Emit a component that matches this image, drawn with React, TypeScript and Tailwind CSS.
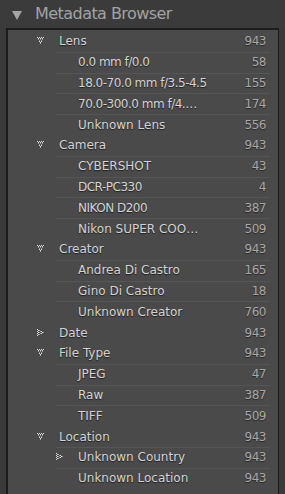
import React from "react";

type Row = { label: string; count: string; level: 0 | 1; icon?: "down" | "right" | "none"; line?: boolean };

const rows: Row[] = [
  { label: "Lens", count: "943", level: 0, icon: "down" },
  { label: "0.0 mm f/0.0", count: "58", level: 1, line: true },
  { label: "18.0-70.0 mm f/3.5-4.5", count: "155", level: 1, line: true },
  { label: "70.0-300.0 mm f/4.…", count: "174", level: 1, line: true },
  { label: "Unknown Lens", count: "556", level: 1, line: true },
  { label: "Camera", count: "943", level: 0, icon: "down" },
  { label: "CYBERSHOT", count: "43", level: 1, line: true },
  { label: "DCR-PC330", count: "4", level: 1, line: true },
  { label: "NIKON D200", count: "387", level: 1, line: true },
  { label: "Nikon SUPER COO…", count: "509", level: 1, line: true },
  { label: "Creator", count: "943", level: 0, icon: "down" },
  { label: "Andrea Di Castro", count: "165", level: 1, line: true },
  { label: "Gino Di Castro", count: "18", level: 1, line: true },
  { label: "Unknown Creator", count: "760", level: 1, line: true },
  { label: "Date", count: "943", level: 0, icon: "right" },
  { label: "File Type", count: "943", level: 0, icon: "down" },
  { label: "JPEG", count: "47", level: 1, line: true },
  { label: "Raw", count: "387", level: 1, line: true },
  { label: "TIFF", count: "509", level: 1, line: true },
  { label: "Location", count: "943", level: 0, icon: "down" },
  { label: "Unknown Country", count: "943", level: 1, icon: "right", line: true },
  { label: "Unknown Location", count: "943", level: 1, line: true },
];

function DotDown() {
  const dots: [number, number][] = [];
  [[0, 2, 4, 6], [1, 3, 5], [2, 4], [3]].forEach((xs, y) => xs.forEach((x) => dots.push([x, y * 2])));
  [[1, 3, 5], [2, 4], [3]].forEach((xs, y) => xs.forEach((x) => dots.push([x, y * 2 + 1])));
  return (
    <svg width="7" height="8" viewBox="0 0 7 8" className="block">
      {dots.map(([x, y], i) => (
        <rect key={i} x={x} y={y} width="1" height="1" fill={(x + y) % 2 === 0 ? "#dcdcdc" : "#9a9a9a"} />
      ))}
    </svg>
  );
}

function DotRight() {
  const dots: [number, number][] = [];
  [[0, 2, 4, 6], [1, 3, 5], [2, 4], [3]].forEach((ys, x) => ys.forEach((y) => dots.push([x * 2, y])));
  [[1, 3, 5], [2, 4], [3]].forEach((ys, x) => ys.forEach((y) => dots.push([x * 2 + 1, y])));
  return (
    <svg width="8" height="7" viewBox="0 0 8 7" className="block">
      {dots.map(([x, y], i) => (
        <rect key={i} x={x} y={y} width="1" height="1" fill={(x + y) % 2 === 0 ? "#dcdcdc" : "#9a9a9a"} />
      ))}
    </svg>
  );
}

export default function App() {
  return (
    <div
      className="w-[285px] h-[494px] bg-[#3a3a3a] flex flex-col overflow-hidden"
      style={{ fontFamily: '"DejaVu Sans", "Liberation Sans", sans-serif' }}
    >
      <div className="h-[28px] flex items-center pl-[12px] bg-[#3b3b3b]">
        <svg width="10" height="10" viewBox="0 0 10 10" className="block mt-[1px]">
          <polygon points="0,1 10,1 5,10" fill="#a4a4a4" />
        </svg>
        <span className="text-[#a2a2a2] text-[16px] tracking-[-0.55px] ml-[13px]">Metadata Browser</span>
      </div>
      <div className="flex-1 ml-[6px] mr-[6px] border-l-2 border-t-2 border-r border-[#1c1c1c] bg-[#4a4a4a] pt-[1px] flex flex-col">
        {rows.map((r, i) => {
          const hasDigit = /[0-9]/.test(r.label);
          return (
            <div key={i} className="relative h-[20.8px] flex items-center shrink-0">
              {r.line && <div className="absolute top-0 left-[48px] right-[8px] h-px bg-[#555555]" />}
              <div className={r.level === 0 ? "w-[30px] pl-[29px]" : "w-[48px] pl-[48px]"}>
                <div className="relative">
                  {r.icon === "down" && (
                    <div className="absolute left-0 -top-[4px]">
                      <DotDown />
                    </div>
                  )}
                  {r.icon === "right" && (
                    <div className="absolute left-0 -top-[4px]">
                      <DotRight />
                    </div>
                  )}
                </div>
              </div>
              <span
                className={
                  "text-[12px] text-[#d4d4d4] whitespace-nowrap " +
                  (hasDigit ? "tracking-[-0.5px] " : "tracking-[0px] ") +
                  (r.level === 0 ? "ml-[21px]" : "ml-[22px]")
                }
                style={{ textShadow: "0 1px 1px rgba(0,0,0,0.6)" }}
              >
                {r.label}
              </span>
              <span
                className="ml-auto mr-[12px] text-[12px] tracking-[-0.5px] text-[#a8a8a8]"
                style={{ textShadow: "0 1px 1px rgba(0,0,0,0.5)" }}
              >
                {r.count}
              </span>
            </div>
          );
        })}
      </div>
    </div>
  );
}
